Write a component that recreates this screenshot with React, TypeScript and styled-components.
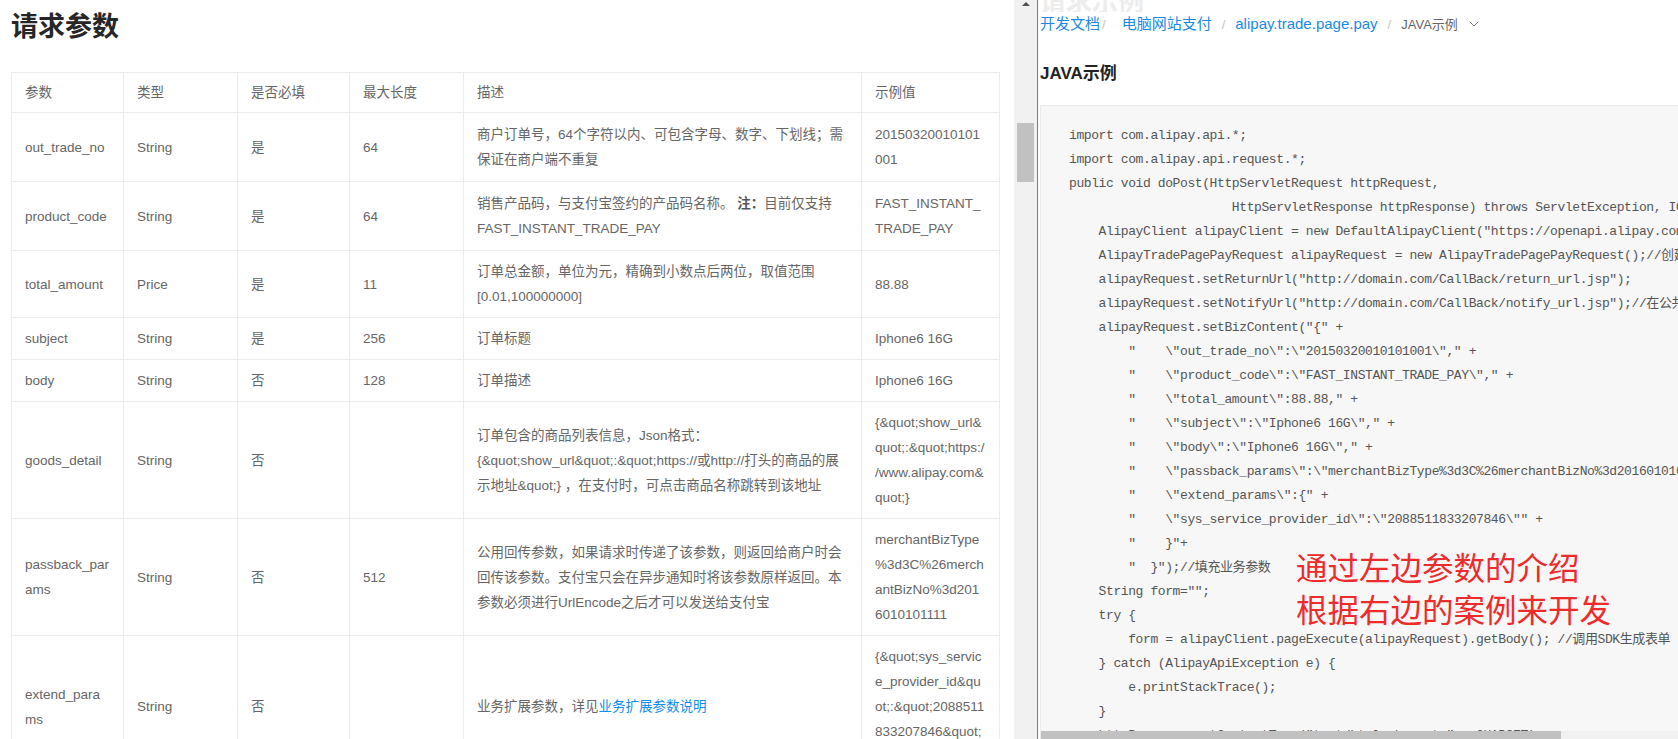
import React from 'react';
import styled, { createGlobalStyle } from 'styled-components';
import { ChevronDown } from 'lucide-react';

const GlobalStyle = createGlobalStyle`
  html, body {
    margin: 0;
    padding: 0;
    background: #fff;
  }
  body {
    font-family: "Liberation Sans", "Noto Sans CJK SC", sans-serif;
    overflow: hidden;
  }
`;

interface Param {
  name: string[];
  type: string;
  required: string;
  maxLen: string;
  desc: React.ReactNode;
  link?: string;
  example: string[];
}

const lines = (arr: string[]) =>
  arr.map((l, i) => (
    <React.Fragment key={i}>
      {i > 0 && <br />}
      {l}
    </React.Fragment>
  ));

const params: Param[] = [
  {
    name: ['out_trade_no'],
    type: 'String',
    required: '是',
    maxLen: '64',
    desc: lines(['商户订单号，64个字符以内、可包含字母、数字、下划线；需', '保证在商户端不重复']),
    example: ['20150320010101', '001'],
  },
  {
    name: ['product_code'],
    type: 'String',
    required: '是',
    maxLen: '64',
    desc: (
      <>
        销售产品码，与支付宝签约的产品码名称。 <b>注：</b>目前仅支持
        <br />
        FAST_INSTANT_TRADE_PAY
      </>
    ),
    example: ['FAST_INSTANT_', 'TRADE_PAY'],
  },
  {
    name: ['total_amount'],
    type: 'Price',
    required: '是',
    maxLen: '11',
    desc: lines(['订单总金额，单位为元，精确到小数点后两位，取值范围', '[0.01,100000000]']),
    example: ['88.88'],
  },
  {
    name: ['subject'],
    type: 'String',
    required: '是',
    maxLen: '256',
    desc: '订单标题',
    example: ['Iphone6 16G'],
  },
  {
    name: ['body'],
    type: 'String',
    required: '否',
    maxLen: '128',
    desc: '订单描述',
    example: ['Iphone6 16G'],
  },
  {
    name: ['goods_detail'],
    type: 'String',
    required: '否',
    maxLen: '',
    desc: lines([
      '订单包含的商品列表信息，Json格式：',
      '{&quot;show_url&quot;:&quot;https://或http://打头的商品的展',
      '示地址&quot;} ，在支付时，可点击商品名称跳转到该地址',
    ]),
    example: ['{&quot;show_url&', 'quot;:&quot;https:/', '/www.alipay.com&', 'quot;}'],
  },
  {
    name: ['passback_par', 'ams'],
    type: 'String',
    required: '否',
    maxLen: '512',
    desc: lines([
      '公用回传参数，如果请求时传递了该参数，则返回给商户时会',
      '回传该参数。支付宝只会在异步通知时将该参数原样返回。本',
      '参数必须进行UrlEncode之后才可以发送给支付宝',
    ]),
    example: ['merchantBizType', '%3d3C%26merch', 'antBizNo%3d201', '6010101111'],
  },
  {
    name: ['extend_para', 'ms'],
    type: 'String',
    required: '否',
    maxLen: '',
    desc: '业务扩展参数，详见',
    link: '业务扩展参数说明',
    example: ['{&quot;sys_servic', 'e_provider_id&qu', 'ot;:&quot;2088511', '833207846&quot;', '}'],
  },
];

const code = String.raw`import com.alipay.api.*;
import com.alipay.api.request.*;
public void doPost(HttpServletRequest httpRequest,
                      HttpServletResponse httpResponse) throws ServletException, IOException {
    AlipayClient alipayClient = new DefaultAlipayClient("https://openapi.alipay.com/gateway.do" , APP_ID, APP_PRIVATE_KEY, FORMAT, CHARSET, ALIPAY_PUBLIC_KEY, SIGN_TYPE); //获得初始化的AlipayClient
    AlipayTradePagePayRequest alipayRequest = new AlipayTradePagePayRequest();//创建API对应的request
    alipayRequest.setReturnUrl("http://domain.com/CallBack/return_url.jsp");
    alipayRequest.setNotifyUrl("http://domain.com/CallBack/notify_url.jsp");//在公共参数中设置回跳和通知地址
    alipayRequest.setBizContent("{" +
        "    \"out_trade_no\":\"20150320010101001\"," +
        "    \"product_code\":\"FAST_INSTANT_TRADE_PAY\"," +
        "    \"total_amount\":88.88," +
        "    \"subject\":\"Iphone6 16G\"," +
        "    \"body\":\"Iphone6 16G\"," +
        "    \"passback_params\":\"merchantBizType%3d3C%26merchantBizNo%3d2016010101111\"," +
        "    \"extend_params\":{" +
        "    \"sys_service_provider_id\":\"2088511833207846\"" +
        "    }"+
        "  }");//填充业务参数
    String form="";
    try {
        form = alipayClient.pageExecute(alipayRequest).getBody(); //调用SDK生成表单
    } catch (AlipayApiException e) {
        e.printStackTrace();
    }
    httpResponse.setContentType("text/html;charset=" + CHARSET);
    httpResponse.getWriter().write(form);//直接将完整的表单html输出到页面
    httpResponse.getWriter().flush();
    httpResponse.getWriter().close();
}`;

const columns = [
  { title: '参数', width: 112 },
  { title: '类型', width: 114 },
  { title: '是否必填', width: 112 },
  { title: '最大长度', width: 114 },
  { title: '描述', width: 398 },
  { title: '示例值', width: 138 },
];

const App = () => (
  <>
    <GlobalStyle />
    <Page>
      <LeftPane>
        <Title>请求参数</Title>
        <ParamTable>
          <colgroup>
            {columns.map((c) => (
              <col key={c.title} style={{ width: c.width }} />
            ))}
          </colgroup>
          <thead>
            <tr>
              {columns.map((c) => (
                <Th key={c.title}>{c.title}</Th>
              ))}
            </tr>
          </thead>
          <tbody>
            {params.map((p) => (
              <Row key={p.name.join('')} $multi={p.example.length === 2}>
                <Td>{lines(p.name)}</Td>
                <Td>{p.type}</Td>
                <Td>{p.required}</Td>
                <Td>{p.maxLen}</Td>
                <Td>
                  {p.desc}
                  {p.link && <DocLink>{p.link}</DocLink>}
                </Td>
                <Td>{lines(p.example)}</Td>
              </Row>
            ))}
          </tbody>
        </ParamTable>
      </LeftPane>

      <VScroll>
        <ArrowBox>
          <UpArrow />
        </ArrowBox>
        <VThumb />
      </VScroll>
      <Divider />

      <RightPane>
        <GhostStrip>
          <GhostTitle>请求示例</GhostTitle>
        </GhostStrip>
        <Crumbs>
          <CrumbLink>开发文档</CrumbLink>
          <Sep $first>/</Sep>
          <CrumbLink>电脑网站支付</CrumbLink>
          <Sep>/</Sep>
          <CrumbLink>alipay.trade.page.pay</CrumbLink>
          <Sep>/</Sep>
          <CrumbCurrent>JAVA示例</CrumbCurrent>
          <ChevronDown size={16} strokeWidth={1.5} color="#777" style={{ marginLeft: 8, verticalAlign: -3 }} />
        </Crumbs>
        <SectionTitle>JAVA示例</SectionTitle>
        <CodeBox>
          <CodeScroll>
            <Code>{code}</Code>
          </CodeScroll>
          <HScroll>
            <HThumb />
          </HScroll>
        </CodeBox>
        <Note>
          通过左边参数的介绍
          <br />
          根据右边的案例来开发
        </Note>
      </RightPane>
    </Page>
  </>
);

export default App;

// Page
const Page = styled.div`
  display: flex;
  height: 100vh;
  overflow: hidden;
`;

// Left: parameter table
const LeftPane = styled.div`
  width: 1014px;
  flex-shrink: 0;
  box-sizing: border-box;
  padding: 0 15px 0 11px;
  overflow: hidden;
`;
const Title = styled.h2`
  margin: 7px 0 29px;
  font-family: "Noto Sans CJK SC", sans-serif;
  font-size: 27px;
  line-height: 36px;
  font-weight: 700;
  color: #262626;
`;
const ParamTable = styled.table`
  width: 988px;
  table-layout: fixed;
  border-collapse: collapse;
  font-size: 13.5px;
  color: #666;
`;
const cell = `
  border: 1px solid #ececec;
  padding: 8px 13px;
  line-height: 25px;
  text-align: left;
  vertical-align: middle;
  white-space: nowrap;
  font-weight: normal;
`;
const Th = styled.th`
  ${cell}
  padding-top: 7px;
  padding-bottom: 7px;
`;
const Row = styled.tr<{ $multi?: boolean }>`
  td {
    ${(p) => (p.$multi ? 'padding-top: 9px; padding-bottom: 9px;' : '')}
  }
`;
const Td = styled.td`
  ${cell}

  b {
    font-weight: 700;
    color: #555;
  }
`;
const DocLink = styled.a`
  color: #108ee9;
  text-decoration: none;
`;

// Scrollbar + divider
const VScroll = styled.div`
  width: 23px;
  flex-shrink: 0;
  background: #f1f1f1;
  display: flex;
  flex-direction: column;
  align-items: center;
`;
const ArrowBox = styled.div`
  height: 17px;
  width: 100%;
  display: flex;
  justify-content: center;
  padding-top: 2px;
  box-sizing: border-box;
`;
const UpArrow = styled.div`
  width: 0;
  height: 0;
  border-left: 4px solid transparent;
  border-right: 4px solid transparent;
  border-bottom: 4px solid #505050;
`;
const VThumb = styled.div`
  width: 17px;
  height: 59px;
  margin-top: 106px;
  background: #c1c1c1;
`;
const Divider = styled.div`
  width: 1px;
  flex-shrink: 0;
  background: #4f86b8;
`;

// Right: code sample
const RightPane = styled.div`
  flex: 1;
  min-width: 0;
  position: relative;
  display: flex;
  flex-direction: column;
  padding-left: 2px;
  overflow: hidden;
`;
const GhostStrip = styled.div`
  height: 12px;
  overflow: hidden;
  flex-shrink: 0;
`;
const GhostTitle = styled.h2`
  margin: -18px 0 0;
  font-family: "Noto Sans CJK SC", sans-serif;
  font-size: 26px;
  line-height: 36px;
  font-weight: 700;
  color: #ededed;
`;
const Crumbs = styled.div`
  margin-top: 1px;
  font-size: 15px;
  line-height: 22px;
  white-space: nowrap;
  color: #999;
`;
const CrumbLink = styled.a`
  color: #1a8ae6;
  text-decoration: none;
`;
const Sep = styled.span<{ $first?: boolean }>`
  display: inline-block;
  margin: 0 ${(p) => (p.$first ? '16px 0 2px' : '10px 0 10px')};
  color: #c4c4c4;
  font-size: 13px;
`;
const CrumbCurrent = styled.span`
  color: #666;
  font-size: 13px;
`;
const SectionTitle = styled.h3`
  margin: 26px 0 19px;
  font-size: 17px;
  line-height: 24px;
  font-weight: 700;
  color: #222;
`;
const CodeBox = styled.div`
  flex: 1;
  min-height: 0;
  display: flex;
  flex-direction: column;
  background: #f7f7f7;
  border: 1px solid #ebebeb;
  border-right: none;
  border-bottom: none;
`;
const CodeScroll = styled.div`
  flex: 1;
  min-height: 0;
  overflow: hidden;
`;
const Code = styled.pre`
  margin: 0;
  padding: 18px 0 0 28px;
  font-family: "Liberation Mono", "Noto Sans CJK SC", monospace;
  font-size: 13px;
  letter-spacing: -0.4px;
  line-height: 24px;
  color: #555;
`;
const HScroll = styled.div`
  height: 8px;
  flex-shrink: 0;
  background: #f1f1f1;
`;
const HThumb = styled.div`
  width: 520px;
  height: 100%;
  background: #c1c1c1;
`;

// Red annotation drawn over the code
const Note = styled.div`
  position: absolute;
  left: 258px;
  top: 545px;
  font-family: "Noto Sans CJK SC", sans-serif;
  font-size: 31.5px;
  line-height: 42px;
  color: #ee2b2b;
  white-space: nowrap;
`;
